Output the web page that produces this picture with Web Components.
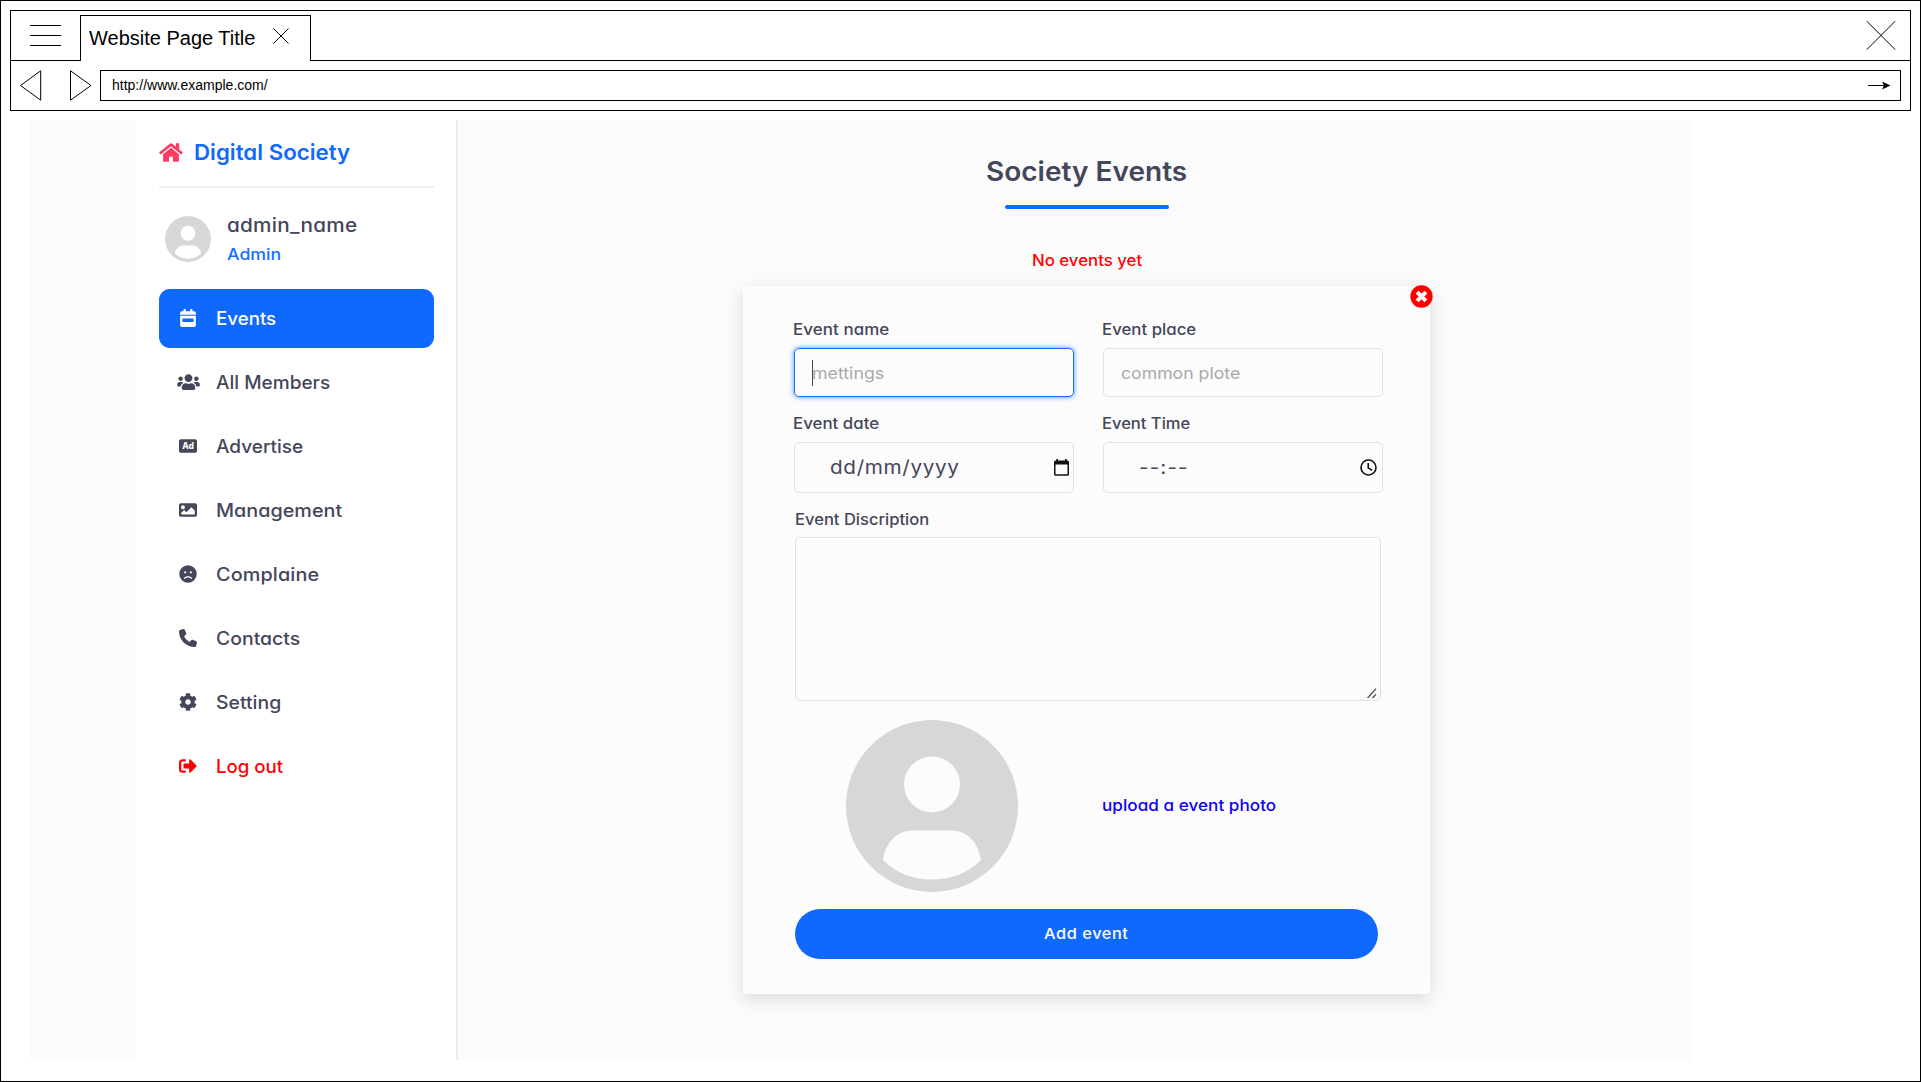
<!DOCTYPE html>
<html lang="en">
<head>
<meta charset="utf-8">
<title>Society Events</title>
<style>
html,body{margin:0;height:1082px;width:1921px;overflow:hidden;background:#fff}
</style>
</head>
<body>
<app-window></app-window>
<script>
const define=(name,html,setup)=>customElements.define(name,class extends HTMLElement{
  connectedCallback(){
    if(this.shadowRoot)return;
    this.attachShadow({mode:'open'}).innerHTML='<style>*{box-sizing:border-box}svg{display:block}</style>'+(typeof html==='function'?html(this):html);
    if(setup)setup(this);
  }
});

const ICONS={
home:['0 0 576 512','<path d="M280.37 148.26L96 300.11V464a16 16 0 0 0 16 16l112.06-.29a16 16 0 0 0 15.92-16V368a16 16 0 0 1 16-16h64a16 16 0 0 1 16 16v95.64a16 16 0 0 0 16 16.05L464 480a16 16 0 0 0 16-16V300L295.67 148.26a12.19 12.19 0 0 0-15.3 0zM571.6 251.47L488 182.56V44.05a12 12 0 0 0-12-12h-56a12 12 0 0 0-12 12v72.61L318.47 43a48 48 0 0 0-61 0L4.34 251.47a12 12 0 0 0-1.6 16.9l25.5 31A12 12 0 0 0 45.15 301l235.22-193.74a12.19 12.19 0 0 1 15.3 0L530.9 301a12 12 0 0 0 16.9-1.6l25.5-31a12 12 0 0 0-1.7-16.93z"/>'],
calendar:['0 0 448 512','<path fill-rule="evenodd" d="M0 464a48 48 0 0 0 48 48h352a48 48 0 0 0 48-48V192H0zM80 272h288a16 16 0 0 1 16 16v64a16 16 0 0 1-16 16H80a16 16 0 0 1-16-16v-64a16 16 0 0 1 16-16zM400 64h-48V16a16 16 0 0 0-16-16h-32a16 16 0 0 0-16 16v48H160V16a16 16 0 0 0-16-16h-32a16 16 0 0 0-16 16v48H48a48 48 0 0 0-48 48v48h448v-48a48 48 0 0 0-48-48z"/>'],
users:['0 0 640 512','<path d="M96 224c35.300 0 64-28.700 64-64s-28.700-64-64-64-64 28.700-64 64 28.700 64 64 64zm448 0c35.300 0 64-28.700 64-64s-28.700-64-64-64-64 28.700-64 64 28.700 64 64 64zm32 32h-64c-17.600 0-33.500 7.100-45.100 18.600 40.300 22.100 68.900 62 75.100 109.400h66c17.700 0 32-14.300 32-32v-32c0-35.300-28.700-64-64-64zm-256 0c61.900 0 112-50.100 112-112S381.900 32 320 32 208 82.100 208 144s50.100 112 112 112zm76.800 32h-8.300c-20.800 10-43.900 16-68.500 16s-47.600-6-68.500-16h-8.300C179.600 288 128 339.600 128 403.200V432c0 26.500 21.500 48 48 48h288c26.500 0 48-21.500 48-48v-28.800c0-63.600-51.600-115.200-115.200-115.200zm-223.700-13.400C161.500 263.100 145.600 256 128 256H64c-35.300 0-64 28.700-64 64v32c0 17.700 14.300 32 32 32h65.900c6.300-47.400 34.900-87.300 75.200-109.400z"/>'],
ad:['0 0 512 512','<rect y="64" width="512" height="384" rx="48"/><text x="256" y="342" text-anchor="middle" font-family="Inter,sans-serif" font-weight="800" font-size="250" textLength="330" lengthAdjust="spacingAndGlyphs" fill="#fff">Ad</text>'],
image:['0 0 512 512','<path fill-rule="evenodd" d="M464 448H48a48 48 0 0 1-48-48V112a48 48 0 0 1 48-48h416a48 48 0 0 1 48 48v288a48 48 0 0 1-48 48zM112 120a56 56 0 1 0 0 112 56 56 0 0 0 0-112zM64 384h384V272l-87.500-87.500a12 12 0 0 0-17 0L208 320l-55.500-55.500a12 12 0 0 0-17 0L64 336z"/>'],
frown:['0 0 496 512','<path fill-rule="evenodd" d="M248 8a248 248 0 1 0 0 496 248 248 0 0 0 0-496zM328 176a32 32 0 1 1 0 64 32 32 0 0 1 0-64zM168 176a32 32 0 1 1 0 64 32 32 0 0 1 0-64zM338 394C316 367 283 352 248 352s-68 15-90 42c-14 16-38-4-25-21 28-34 70-53 115-53s87 19 115 53c13 17-11 37-25 21z"/>'],
phone:['0 0 512 512','<path d="M164.900 24.600c-7.700-18.600-28-28.500-47.400-23.200l-88 24C12.100 30.200 0 46 0 64C0 311.400 200.600 512 448 512c18 0 33.800-12.100 38.600-29.500l24-88c5.300-19.400-4.600-39.700-23.200-47.400l-96-40c-16.300-6.800-35.200-2.100-46.300 11.600L304.700 368C234.300 334.700 177.300 277.700 144 207.300L193.300 167c13.700-11.200 18.400-30 11.600-46.300l-40-96z"/>'],
cog:['0 0 512 512','<path d="M487.400 315.700l-42.600-24.600c4.300-23.200 4.300-47 0-70.200l42.600-24.600c4.900-2.800 7.100-8.600 5.500-14-11.100-35.600-30-67.800-54.700-94.600-3.800-4.100-10-5.100-14.800-2.300L380.800 110c-17.900-15.400-38.500-27.300-60.800-35.100V25.800c0-5.600-3.900-10.500-9.400-11.700-36.700-8.200-74.300-7.800-109.200 0-5.500 1.200-9.400 6.100-9.400 11.700V75c-22.200 7.900-42.800 19.800-60.800 35.100L88.700 85.500c-4.900-2.800-11-1.900-14.800 2.300-24.700 26.700-43.600 58.900-54.700 94.600-1.700 5.400.6 11.200 5.500 14L67.300 221c-4.300 23.200-4.300 47 0 70.200l-42.600 24.600c-4.900 2.800-7.100 8.600-5.500 14 11.100 35.600 30 67.800 54.700 94.600 3.800 4.100 10 5.100 14.800 2.300l42.600-24.600c17.900 15.400 38.500 27.300 60.800 35.100v49.200c0 5.600 3.900 10.500 9.400 11.700 36.700 8.200 74.300 7.800 109.200 0 5.500-1.200 9.400-6.100 9.400-11.700v-49.200c22.200-7.900 42.800-19.800 60.800-35.100l42.600 24.600c4.900 2.800 11 1.900 14.800-2.300 24.700-26.700 43.600-58.900 54.700-94.600 1.500-5.500-.7-11.300-5.600-14.100zM256 336c-44.100 0-80-35.900-80-80s35.900-80 80-80 80 35.900 80 80-35.900 80-80 80z"/>'],
logout:['0 0 512 512','<path d="M497 273L329 441c-15 15-41 4.500-41-17v-96H152c-13.300 0-24-10.700-24-24v-96c0-13.300 10.700-24 24-24h136V88c0-21.400 25.900-32 41-17l168 168c9.300 9.400 9.300 24.600 0 34zM192 436v-40c0-6.600-5.400-12-12-12H96c-17.700 0-32-14.300-32-32V160c0-17.700 14.300-32 32-32h84c6.600 0 12-5.400 12-12V76c0-6.600-5.400-12-12-12H96c-53 0-96 43-96 96v192c0 53 43 96 96 96h84c6.600 0 12-5.400 12-12z"/>'],
close:['0 0 512 512','<circle cx="256" cy="256" r="248"/><path d="M158 158L354 354M354 158L158 354" stroke="#fff" stroke-width="92"/>'],
avatar:['-86 -86 172 172','<path fill-rule="evenodd" d="M0-86a86 86 0 1 0 0 172 86 86 0 0 0 0-172zM0-49.500a28 28 0 1 1 0 56 28 28 0 0 1 0-56zM-49 54C-46 36-35 24.500-19 24.500H19C35 24.500 46 36 49 54C36 67 19 73.500 0 73.500S-36 67-49 54z"/>'],
date:['0 0 15 17','<path fill-rule="evenodd" d="M2.300 0H4V1.600H11V0H12.700V1.600H13.500A1.500 1.500 0 0 1 15 3.100V15.200A1.500 1.500 0 0 1 13.500 16.700H1.500A1.500 1.500 0 0 1 0 15.200V3.100A1.500 1.500 0 0 1 1.500 1.600H2.300zM1.500 5.600V15.200H13.500V5.600z"/>'],
clock:['0 0 17 17','<g fill="none" stroke="currentColor" stroke-width="1.600"><circle cx="8.500" cy="8.500" r="7.500"/><path d="M8.200 3.900V8.900L12 11.200"/></g>']
};

define('ui-icon',e=>{
  const [vb,body]=ICONS[e.getAttribute('name')];
  return `<style>:host{display:block;flex:none}</style><svg width="${e.getAttribute('w')}" height="${e.getAttribute('h')}" viewBox="${vb}" fill="currentColor">${body}</svg>`;
});

// Single line of text, widened to fill the width in "w": glyphs first, then tracking.
define('fit-text',e=>`<style>
:host{display:block;flex:none;width:${e.getAttribute('w')}px;height:24px;white-space:nowrap;font:${e.getAttribute('weight')||480} ${e.getAttribute('size')}px/24px Inter,"Open Sans",sans-serif;font-feature-settings:"cv11","ss03"}
span{display:inline-block;margin-left:-1px;transform-origin:0 50%}</style><span><slot></slot></span>`,e=>{
  const s=e.shadowRoot.querySelector('span'),w=+e.getAttribute('w')+1.2,n=s.getBoundingClientRect().width;
  const k=Math.max(.94,Math.min(1.09,w/n));
  s.style.letterSpacing=((w/k-n)/(e.textContent.length-.5))+'px';
  s.style.transform='scaleX('+k+')';
});

define('browser-bar',`<style>
:host{display:block;width:1901px;height:101px;margin:9px 0 0 9px;border:1px solid #000;font-family:"Liberation Sans",Arial,sans-serif;color:#000}
.tabs{height:50px;display:flex;border-bottom:1px solid #000}
.menu{width:31px;margin:14px 19px 0 19px}
.tab{width:231px;height:46px;margin-top:4px;border:1px solid #000;border-bottom:0;background:#fff;display:flex;font-size:20px;line-height:45px;padding-left:8px}
.tab b{font-weight:400;width:184px}.tab svg{margin-top:12px}
.end{margin:9px 14.500px 0 auto}
.nav{display:flex;height:49px;padding:9px 9px 0 8px}
.url{width:1801px;height:31px;border:1px solid #000;margin-left:8px;display:flex;align-items:center;justify-content:space-between;padding:0 9px 0 11px;font-size:14px}
.url span{line-height:29px}
</style>
<div class="tabs">
<svg class="menu" width="31" height="22" stroke="#000"><path d="M0 .5H31M0 10.500H31M0 20.500H31"/></svg>
<div class="tab"><b>Website Page Title</b><svg width="16" height="16" stroke="#000"><path d="M.5.5L15.500 15.500M15.500.5L.5 15.500"/></svg></div>
<svg class="end" width="30" height="31" stroke="#000"><path d="M.8 1.200L29.200 29.600M29.200 1.200L.8 29.600"/></svg>
</div>
<div class="nav">
<svg width="73" height="32" fill="none" stroke="#000"><path d="M1.500 15.500L21.700.8V30.200zM72 15.500L51.500.8V30.200z"/></svg>
<div class="url"><span>http://www.example.com/</span><svg width="23" height="9"><path d="M0 4.500H16" stroke="#000"/><path d="M14 .5L22.500 4.500L14 8.500L16 4.500z"/></svg></div>
</div>`);

define('nav-item',e=>`<style>
:host{display:flex;align-items:center;width:275px;height:59px;padding-bottom:2px;box-sizing:border-box;margin-bottom:5px;border-radius:11px;color:#44465a}
:host([active]){background:#0f69ff;color:#fff}
:host([danger]){color:#f00}
.i{width:24px;display:flex;justify-content:center;margin:0 17px 0 17px}</style>
<div class="i"><ui-icon name="${e.getAttribute('icon')}" w="${e.getAttribute('iw')||18}" h="18"></ui-icon></div>
<fit-text w="${e.getAttribute('w')}" size="18.2">${e.getAttribute('label')}</fit-text>`);

define('side-bar',`<style>
:host{display:block;box-sizing:border-box;width:322px;height:940px;padding:0 0 0 23px;background:#fff;border-right:2px solid #ececed;color:#44465a}
.brand{height:68px;width:275px;border-bottom:2px solid #eee;display:flex;padding-top:20px;color:#0f69ff}
.brand ui-icon{color:#ff3860;margin:2px 12px 0 0;height:21px}
.me{display:flex;height:101px;padding:28px 0 0 6px}
.me ui-icon{color:#d7d7d7;margin-right:17px}
.me fit-text{margin:-2px 0 9px}
.me .r{color:#1570ff;margin-top:-5px}</style>
<div class="brand"><ui-icon name="home" w="24" h="21"></ui-icon><fit-text w="155" size="21.500" weight="600">Digital Society</fit-text></div>
<div class="me"><ui-icon name="avatar" w="46" h="46"></ui-icon><div><fit-text w="129" size="19">admin_name</fit-text><fit-text class="r" w="53" size="16.500">Admin</fit-text></div></div>
<nav-item active icon="calendar" iw="16" w="59" label="Events"></nav-item>
<nav-item icon="users" iw="23" w="113" label="All Members"></nav-item>
<nav-item icon="ad" w="86" label="Advertise"></nav-item>
<nav-item icon="image" w="125" label="Management"></nav-item>
<nav-item icon="frown" w="102" label="Complaine"></nav-item>
<nav-item icon="phone" w="83" label="Contacts"></nav-item>
<nav-item icon="cog" w="64" label="Setting"></nav-item>
<nav-item danger icon="logout" w="66" label="Log out"></nav-item>`);

define('form-field',e=>`<style>
:host{display:block;width:280px;color:#44465a}
.box{margin-top:6px;height:${e.getAttribute('bh')}px;border:1.500px solid #e0e0e1;border-radius:5px;display:flex;align-items:center;padding:0 3px 0 18px}
:host([focused]) .box{border-color:#1a6dff;box-shadow:0 0 5px #0f69ffcc}
:host([hint]) .v{color:#a9a9a9}
.caret{width:1px;height:26px;background:#44465a;margin:0 0 0 -1px}
.v{margin-left:${e.getAttribute('indent')||0}px}</style>
<fit-text w="${e.getAttribute('lw')}" size="15.500">${e.getAttribute('label')}</fit-text>
<div class="box">${e.hasAttribute('focused')?'<i class="caret"></i>':''}<fit-text class="v" w="${e.getAttribute('vw')}" size="${e.getAttribute('vs')}" weight="420">${e.getAttribute('value')}</fit-text><slot></slot></div>`);

define('event-form',`<style>
:host{display:block;box-sizing:border-box;position:relative;width:687px;height:708px;padding:32px 47px 0 51px;background:#fcfcfc;box-shadow:0 5px 16px rgba(0,0,0,.13);color:#44465a}
.x{position:absolute;top:-1px;left:666.500px;color:#f00}
.row{display:flex;justify-content:space-between}
.r2{margin-top:15px}
form-field ui-icon{margin-left:auto;color:#111}
.d{margin:15px 0 0 2px}
.area{width:586px;height:164px;border:1.500px solid #e0e0e1;border-radius:5px;margin:5px 0 0 1px;display:flex;justify-content:flex-end;align-items:flex-end;padding:0 3px 1px 0}
.up{display:flex;align-items:center;margin-top:19px;height:172px;color:#0d00ff}
.up ui-icon{color:#d7d7d7;margin:0 85px 0 52px}
.btn{margin:17px 0 0 1px;width:583px;height:50px;border-radius:25px;background:#0f69ff;color:#fff;display:flex;align-items:center;justify-content:center}
</style>
<ui-icon class="x" name="close" w="23" h="23"></ui-icon>
<div class="row">
<form-field focused hint bh="49" label="Event name" lw="95" value="mettings" vw="71" vs="16.500"></form-field>
<form-field hint bh="49" label="Event place" lw="93" value="common plote" vw="118" vs="16.500"></form-field></div>
<div class="row r2">
<form-field bh="51" label="Event date" lw="85" value="dd/mm/yyyy" vw="128" vs="19" indent="18"><ui-icon name="date" w="15" h="17" style="margin-right:1px"></ui-icon></form-field>
<form-field bh="51" label="Event Time" lw="87" value="--:--" vw="48" vs="19" indent="18"><ui-icon name="clock" w="17" h="17" style="margin-right:2px"></ui-icon></form-field></div>
<fit-text class="d" w="133" size="15.500">Event Discription</fit-text>
<div class="area"><svg width="10" height="11" stroke="#555" stroke-width="1.300"><path d="M.5 10L9 .8M5.500 10L9 6.200"/></svg></div>
<div class="up"><ui-icon name="avatar" w="172" h="172"></ui-icon><fit-text w="173" size="15.700">upload a event photo</fit-text></div>
<div class="btn"><fit-text w="83" size="15">Add event</fit-text></div>`);

define('events-page',`<style>
:host{display:block;box-sizing:border-box;width:1232px;height:940px;padding-top:40px;color:#44465a}
.c{display:flex;flex-direction:column;align-items:center;width:1258px}
.bar{width:164px;height:4.500px;border-radius:2px;background:#0f69ff;margin:20.500px 0 40px}
.none{color:#f00}
event-form{margin:13px 0 0 285px}</style>
<div class="c"><fit-text w="200" size="27" weight="600">Society Events</fit-text><div class="bar"></div><fit-text class="none" w="109" size="15.500">No events yet</fit-text></div>
<event-form></event-form>`);

define('app-window',`<style>
:host{display:block;box-sizing:border-box;width:1921px;height:1082px;border:1px solid #000;background:#fff}
.page{display:flex;box-sizing:border-box;width:1660.500px;height:940px;margin:9px 0 0 29px;padding-left:106px;background:#fbfbfb}</style>
<browser-bar></browser-bar><div class="page"><side-bar></side-bar><events-page></events-page></div>`);
</script>
</body>
</html>
